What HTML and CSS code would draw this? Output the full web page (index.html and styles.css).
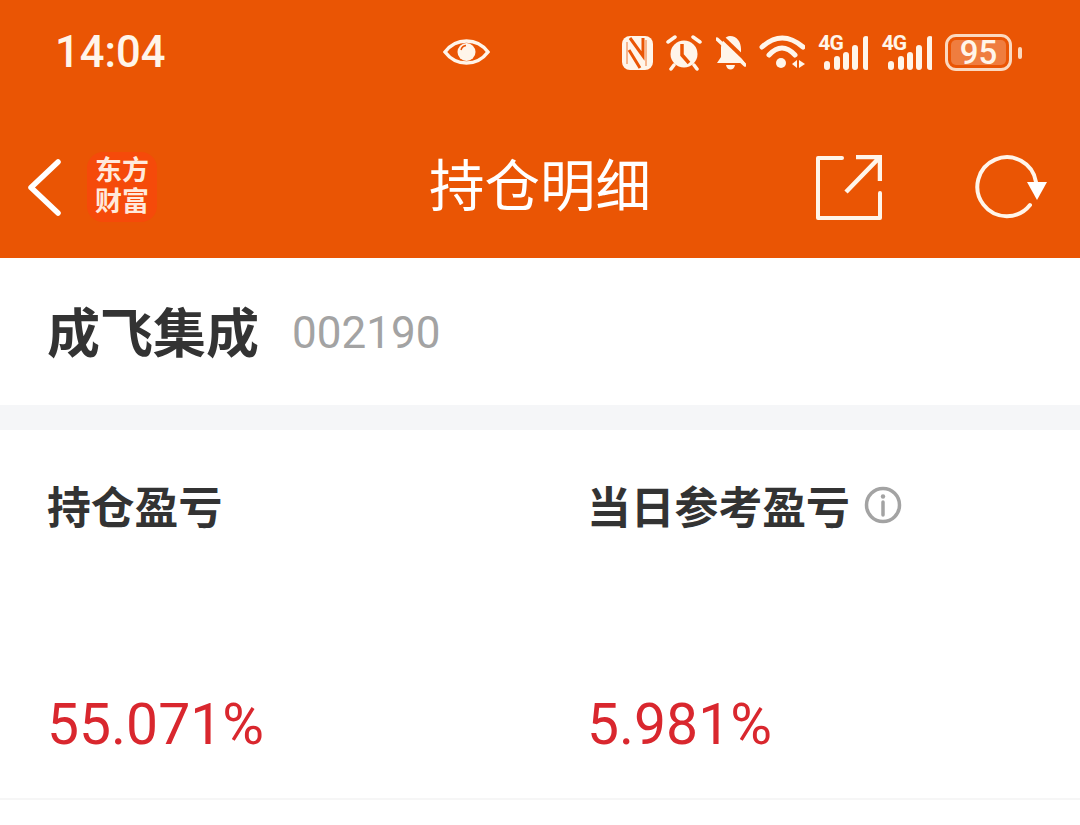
FILE: index.html
```html
<!DOCTYPE html>
<html lang="zh-CN">
<head>
  <meta charset="UTF-8" />
  <meta name="viewport" content="width=device-width, initial-scale=1.0"/>
  <title>持仓明细</title>
  <link rel="stylesheet" href="styles.css">
</head>
<body>

  <header class="header">
    <!-- status bar -->
    <div class="status">
      <span class="time">14:04</span>
      <svg class="eye" width="47" height="26" viewBox="0 0 47 26">
        <path d="M2 13C8 5 15 2 23.500 2S39 5 45 13C39 21 32 24 23.500 24S8 21 2 13Z" fill="none" stroke="#fff5ea" stroke-width="3.500"/>
        <circle cx="23.500" cy="13" r="9" fill="#fff5ea"/>
        <path d="M18 11A6 6 0 0 1 23 6.500" fill="none" stroke="#ea5504" stroke-width="1.500"/>
      </svg>
      <div class="status-icons">
        <svg width="31" height="34" viewBox="0 0 31 34">
          <rect width="31" height="34" rx="8" fill="#fff5ea"/>
          <path d="M8 2L21 20V2M7 14L18 32" fill="none" stroke="#ea5504" stroke-width="3"/>
          <path d="M24 4V30M5 6L5 28" fill="none" stroke="#ea5504" stroke-width="0.800"/>
        </svg>
        <svg width="36" height="36" viewBox="0 0 36 36">
          <circle cx="18" cy="19" r="13.500" fill="#fff5ea"/>
          <path d="M16 9V20L23 28" fill="none" stroke="#ea5504" stroke-width="3.500"/>
          <path d="M2 7L9 2M34 7L27 2M8 30L5 34M28 30L31 34" fill="none" stroke="#fff5ea" stroke-width="3.500" stroke-linecap="round"/>
        </svg>
        <svg width="30" height="36" viewBox="0 0 30 36">
          <path d="M14 1C21 1 25 7 25 14V22L29 28H1L5 22V12C6 6 9 1 14 1Z" fill="#fff5ea"/>
          <path d="M10 30H19C18 36 11 36 10 30Z" fill="#fff5ea"/>
          <path d="M3 -1L32 27" stroke="#ea5504" stroke-width="4"/>
          <path d="M1 4L29 30" stroke="#fff5ea" stroke-width="3.500" stroke-linecap="round"/>
        </svg>
        <svg width="46" height="36" viewBox="0 0 46 36">
          <path d="M3 12Q23 -6 44 12M10 20Q23 6 36 20" fill="none" stroke="#fff5ea" stroke-width="5" stroke-linecap="round"/>
          <circle cx="22" cy="28" r="5" fill="#fff5ea"/>
          <path d="M33 29L38 25V33ZM40 25L46 29L40 33Z" fill="#fff5ea"/>
        </svg>
        <div class="signal">
          <span class="net">4G</span>
          <svg width="50" height="36" viewBox="0 0 50 36">
            <path d="M9 29V32M19 24V32M28 20V32M37 13V32M48 4V32" fill="none" stroke="#fff5ea" stroke-width="6" stroke-linecap="round"/>
          </svg>
        </div>
        <div class="signal">
          <span class="net">4G</span>
          <svg width="50" height="36" viewBox="0 0 50 36">
            <path d="M9 29V32M19 24V32M28 20V32M37 13V32M48 4V32" fill="none" stroke="#fff5ea" stroke-width="6" stroke-linecap="round"/>
          </svg>
        </div>
        <div class="battery">
          <div class="battery-body"><span class="battery-level">95</span></div>
          <i class="battery-nub"></i>
        </div>
      </div>
    </div>

    <!-- nav bar -->
    <nav class="nav">
      <div class="nav-left">
        <svg width="36" height="58" viewBox="0 0 36 58">
          <path d="M31 4L4 29.500L31 55" fill="none" stroke="#fff" stroke-width="5.500" stroke-linecap="round" stroke-linejoin="round"/>
        </svg>
        <div class="logo">东方<br>财富</div>
      </div>
      <h1 class="title">持仓明细</h1>
      <div class="nav-right">
        <svg width="66" height="65" viewBox="0 0 66 65">
          <path d="M26 3H2V63H64V38" fill="none" stroke="#fff5ea" stroke-width="4" stroke-linejoin="round" stroke-linecap="round"/>
          <path d="M30 37L63 3M40 2H64V26" fill="none" stroke="#fff5ea" stroke-width="4.500"/>
        </svg>
        <svg width="74" height="66" viewBox="0 0 74 66">
          <path d="M56 51A29.500 29.500 0 1 1 62 28" fill="none" stroke="#fff5ea" stroke-width="4" stroke-linecap="round"/>
          <path d="M53 28H73L63 46Z" fill="#fff"/>
        </svg>
      </div>
    </nav>
  </header>

  <section class="stock">
    <span class="stock-name">成飞集成</span>
    <span class="stock-code">002190</span>
  </section>

  <section class="profit">
    <div class="profit-col">
      <div class="profit-label">持仓盈亏</div>
      <div class="profit-value">55.071%</div>
    </div>
    <div class="profit-col">
      <div class="profit-label">当日参考盈亏
        <svg class="info" width="38" height="38" viewBox="0 0 38 38">
          <circle cx="19" cy="19" r="16.500" fill="none" stroke="#a3a3a3" stroke-width="3.500"/>
          <circle cx="19" cy="10.500" r="2.200" fill="#a3a3a3"/>
          <path d="M19 16V29" stroke="#a3a3a3" stroke-width="3.500" stroke-linecap="round"/>
        </svg>
      </div>
      <div class="profit-value">5.981%</div>
    </div>
  </section>

</body>
</html>
```

FILE: styles.css
```css
* { box-sizing: border-box; }
html, body { height: 100%; }
body {
  margin: 0;
  background: #fff;
  font-family: Roboto, "Noto Sans CJK SC", sans-serif;
  overflow: hidden;
}
.header {
  background: #ea5504;
  color: #fff;
}
.status {
  height: 105px;
  display: flex;
  align-items: center;
  padding: 0 58px 0 55px;
}
.time {
  font-size: 43.500px;
  font-weight: 500;
  color: #fff5ea;
  width: 110px;
  white-space: nowrap;
}
.eye { margin-left: 278px; margin-top: -2px; }
.status-icons {
  margin-left: auto;
  display: flex;
  align-items: center;
  gap: 13.330px;
}
.signal {
  position: relative;
  width: 50px;
  height: 36px;
}
.net {
  position: absolute;
  left: 0;
  top: -2px;
  font-size: 21px;
  line-height: 21px;
  font-weight: 700;
  letter-spacing: -1px;
  color: #fff5ea;
}
.battery {
  display: flex;
  align-items: center;
  gap: 6px;
}
.battery-body {
  width: 67px;
  height: 37px;
  padding: 3px;
  border: 3px solid #fbd9c0;
  border-radius: 11px;
}
.battery-level {
  display: block;
  height: 100%;
  background: #ef7d3f;
  border-radius: 5px;
  color: #fff5ea;
  font-size: 33px;
  font-weight: 500;
  line-height: 25px;
  text-align: center;
}
.battery-nub {
  width: 4px;
  height: 12px;
  background: #fbd9c0;
  border-radius: 2px;
}
.nav {
  height: 153px;
  display: flex;
  align-items: center;
  padding: 0 32px 0 27px;
  position: relative;
}
.nav-left {
  display: flex;
  align-items: center;
  gap: 24px;
  margin-top: 11px;
}
.logo {
  width: 70px;
  height: 70px;
  background: #f54a0a;
  border-radius: 16px;
  font-size: 27px;
  font-weight: 700;
  line-height: 31px;
  text-align: center;
  padding-top: 4px;
  color: #ffe9dc;
}
.title {
  position: absolute;
  left: 0;
  right: 0;
  top: 50px;
  margin: 0;
  font-size: 55.500px;
  line-height: 66px;
  font-weight: 400;
  text-align: center;
}
.nav-right {
  margin-left: auto;
  display: flex;
  align-items: center;
  gap: 92px;
  margin-top: 11px;
}
.stock {
  height: 147px;
  display: flex;
  align-items: center;
  gap: 33px;
  padding: 0 48px 0 47px;
}
.stock-name {
  font-size: 53px;
  font-weight: 700;
  color: #333;
  margin-top: -4px;
}
.stock-code {
  font-size: 44px;
  color: #a3a3a3;
  margin-top: 3px;
}
.profit {
  margin-top: 25px;
  height: 370px;
  border-bottom: 2px solid #f6f6f6;
  box-shadow: 0 -25px 0 #f5f6f8;
  display: grid;
  grid-template-columns: 540px 1fr;
  padding: 49px 47px 0;
}
.profit-label {
  display: flex;
  align-items: center;
  gap: 14px;
  height: 52px;
  font-size: 43.800px;
  font-weight: 700;
  color: #333;
}
.info { margin-top: 0; }
.profit-value {
  margin-top: 160px;
  font-size: 57px;
  line-height: 68px;
  color: #d9272e;
}
```
